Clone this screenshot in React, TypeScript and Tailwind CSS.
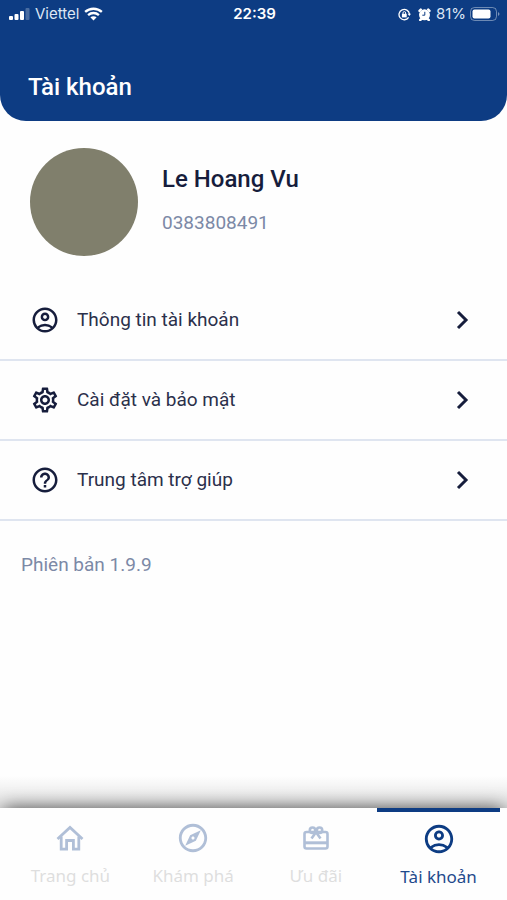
import type { ReactNode } from "react";
import {
  MdHelpOutline,
  MdOutlineAccountCircle,
  MdOutlineExplore,
  MdOutlineSettings,
} from "react-icons/md";

function SignalIcon() {
  return (
    <svg width="21" height="12" viewBox="0 0 21 12" fill="#fff" aria-hidden="true">
      <rect x="0" y="8" width="4" height="4" rx="1" />
      <rect x="5.5" y="6" width="4" height="6" rx="1" />
      <rect x="11" y="3" width="4" height="9" rx="1" />
      <rect x="16.5" y="0" width="4" height="12" rx="1" opacity="0.25" />
    </svg>
  );
}

function WifiIcon() {
  return (
    <svg width="19" height="14" viewBox="0 0 20 14" fill="none" stroke="#fff" strokeWidth="2.5" aria-hidden="true">
      <path d="M1.2 4.8C6.2 0.3 13.8 0.3 18.8 4.8" />
      <path d="M4.3 8.1C7.6 5.2 12.4 5.2 15.7 8.1" />
      <path d="M10 13.8L6.7 10.5C8.6 8.9 11.4 8.9 13.3 10.5Z" fill="#fff" stroke="none" />
    </svg>
  );
}

function LockRotationIcon() {
  return (
    <svg width="13" height="13" viewBox="0 0 13 13" fill="none" stroke="#fff" strokeWidth="1.3" aria-hidden="true">
      <path d="M10.6 9.4A5.2 5.2 0 1 1 11.4 6" />
      <path d="M9.6 5.7H13l-1.7 2.3z" fill="#fff" stroke="none" />
      <rect x="3.9" y="5.8" width="4.8" height="3.6" fill="#fff" stroke="none" />
      <path d="M5 6V4.9a1.3 1.3 0 0 1 2.6 0V6" strokeWidth="1" />
    </svg>
  );
}

function AlarmIcon() {
  return (
    <svg width="13" height="13" viewBox="0 0 13 13" aria-hidden="true">
      <circle cx="6.5" cy="6.8" r="5.5" fill="#fff" />
      <path d="M1.5 2.8L2.8 1.500M11.500 2.8L10.200 1.500M2.200 12L4 10.500M10.800 12L9 10.500" stroke="#fff" strokeWidth="2.4" strokeLinecap="round" />
      <path d="M6.800 3.800V7.200H4.300" fill="none" stroke="#0d3c83" strokeWidth="1" />
    </svg>
  );
}

function BatteryIcon() {
  return (
    <svg width="30" height="14" viewBox="0 0 30 14" aria-hidden="true">
      <rect x="0.5" y="0.5" width="26" height="13" rx="4" fill="none" stroke="#fff" strokeOpacity="0.4" />
      <rect x="2.5" y="2.5" width="18" height="9" rx="2" fill="#fff" />
      <path d="M28 5v4c2-1 2-3 0-4z" fill="#fff" opacity="0.45" />
    </svg>
  );
}

function HomeIcon() {
  return (
    <svg width="28" height="26" viewBox="0 0 28 26" fill="none" stroke="currentColor" strokeWidth="2.8" aria-hidden="true">
      <path d="M1.5 14L14 2.500l12.500 11.500" />
      <path d="M5.200 11.500v12.700h5.400v-8.700h6.800v8.700h5.400V11.500" />
    </svg>
  );
}

function GiftIcon() {
  return (
    <svg width="26" height="24" viewBox="0 0 26 24" fill="none" stroke="currentColor" strokeWidth="2.6" aria-hidden="true">
      <rect x="1.500" y="6" width="23" height="16.500" rx="2" />
      <path d="M1.500 16.800h23" strokeWidth="3" />
      <circle cx="9.500" cy="4.200" r="2.700" />
      <circle cx="16.500" cy="4.200" r="2.700" />
      <path d="M12.800 6.500L8.500 12.500M13.200 6.500l4.300 6" />
    </svg>
  );
}

function ChevronIcon() {
  return (
    <svg width="14" height="20" viewBox="0 0 14 20" fill="none" stroke="#161d3c" strokeWidth="3" aria-hidden="true">
      <path d="M2 2l8 8-8 8" />
    </svg>
  );
}

function MenuRow({ icon, label }: { icon: ReactNode; label: string }) {
  return (
    <li className="border-b-2 border-[#dfe5f0]">
      <button type="button" className="flex h-[78px] w-full items-center pr-[37px] pl-[30px] text-left text-[#161d3c]">
        {icon}
        <span className="ml-[17px] flex-1 text-[19px] leading-6 text-[#2b304b]">{label}</span>
        <ChevronIcon />
      </button>
    </li>
  );
}

function NavTab({ icon, label, active = false }: { icon: ReactNode; label: string; active?: boolean }) {
  return (
    <a
      href="#"
      aria-current={active ? "page" : undefined}
      className={
        active
          ? "flex flex-1 flex-col items-center gap-2 border-t-4 border-[#0d3c83] pt-[9px] text-[#0d3c83]"
          : "flex flex-1 flex-col items-center gap-2 border-t-4 border-transparent pt-2 text-[#b0bfd7]"
      }
    >
      <span className="flex h-9 items-center">{icon}</span>
      <span
        className={
          active
            ? "font-['Noto_Sans',sans-serif] text-[17px] leading-6 text-[#1f4a8c]"
            : "font-['Noto_Sans',sans-serif] text-[17px] leading-6 text-[#dedede]"
        }
      >
        {label}
      </span>
    </a>
  );
}

export default function App() {
  return (
    <div className="flex min-h-screen flex-col bg-[#fefefe] font-[Roboto,sans-serif]">
      <header className="rounded-b-[26px] bg-[#0d3c83] pb-[18px] text-white">
        <div className="grid h-7 grid-cols-[1fr_auto_1fr] items-center pr-[7px] pl-[9px] font-[Inter,sans-serif] text-[15px] leading-5">
          <div className="flex items-center gap-[5px]">
            <SignalIcon />
            <span className="text-[#dde6f4]">Viettel</span>
            <WifiIcon />
          </div>
          <span className="font-semibold">22:39</span>
          <div className="flex items-center justify-end">
            <LockRotationIcon />
            <span className="ml-[7px]">
              <AlarmIcon />
            </span>
            <span className="mr-1 ml-[5px] text-[#dde6f4]">81%</span>
            <BatteryIcon />
          </div>
        </div>
        <h1 className="mt-[43px] pl-7 text-[24px] leading-8 font-medium">Tài khoản</h1>
      </header>

      <main className="flex-1">
        <section className="flex items-center gap-6 pt-[27px] pl-[30px]">
          <div className="size-[108px] rounded-full bg-[#807f6c]" />
          <div className="pb-1.5">
            <h2 className="text-[24px] leading-8 font-medium text-[#161d3c]">Le Hoang Vu</h2>
            <p className="mt-4 text-[19px] leading-6 text-[#7c89a6]">0383808491</p>
          </div>
        </section>

        <ul className="mt-[25px]">
          <MenuRow icon={<MdOutlineAccountCircle size={30} />} label="Thông tin tài khoản" />
          <MenuRow icon={<MdOutlineSettings size={30} />} label="Cài đặt và bảo mật" />
          <MenuRow icon={<MdHelpOutline size={30} />} label="Trung tâm trợ giúp" />
        </ul>

        <p className="mt-8 pl-[21px] text-[19px] leading-6 text-[#7c89a6]">Phiên bản 1.9.9</p>
      </main>

      <div className="h-8 overflow-hidden bg-linear-to-b from-[#fefefe] to-[#e0e0e0] pt-8">
        <div className="mx-1 h-10 shadow-[0_0_18px_0_rgba(0,0,0,0.65)]" />
      </div>
      <nav className="flex h-[92px] pr-[7px] pl-[9px]">
        <NavTab icon={<HomeIcon />} label="Trang chủ" />
        <NavTab icon={<MdOutlineExplore size={34} />} label="Khám phá" />
        <NavTab icon={<GiftIcon />} label="Ưu đãi" />
        <NavTab icon={<MdOutlineAccountCircle size={34} />} label="Tài khoản" active />
      </nav>
    </div>
  );
}
